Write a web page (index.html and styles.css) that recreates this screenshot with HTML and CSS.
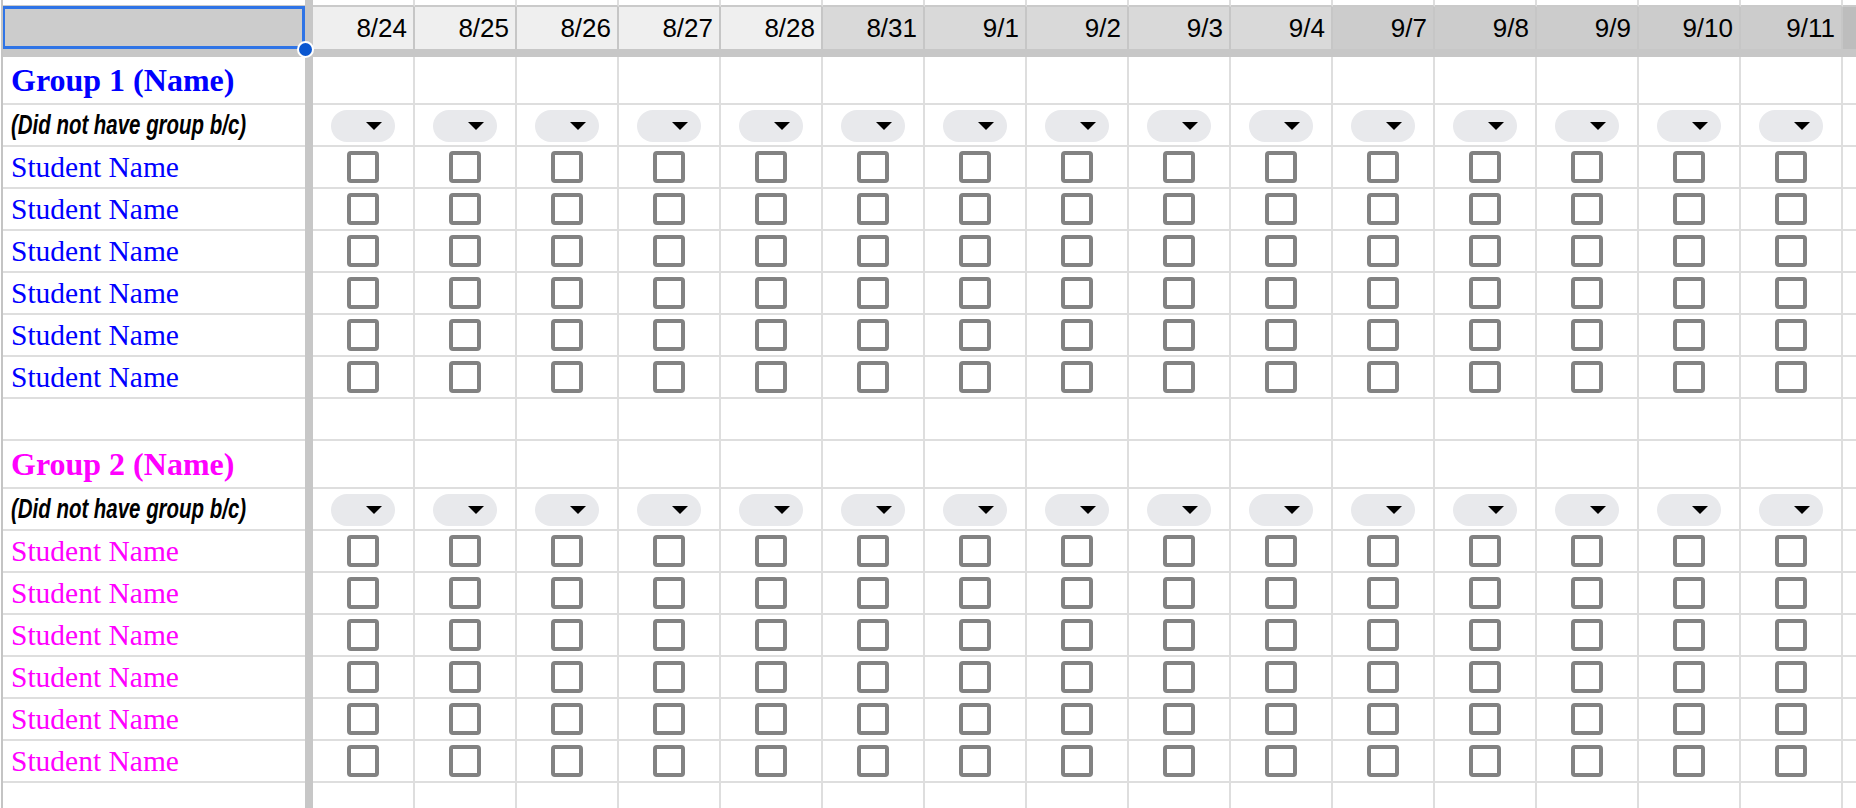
FILE: index.html
```html
<!DOCTYPE html>
<html lang="en">
<head>
    <meta charset="UTF-8">
    <title>Group Attendance</title>
    <link rel="stylesheet" href="styles.css">
</head>
<body>
    <div class="sheet" id="sheet"></div>

    <script>
        const dates = ['8/24', '8/25', '8/26', '8/27', '8/28', '8/31', '9/1', '9/2', '9/3', '9/4', '9/7', '9/8', '9/9', '9/10', '9/11'];
        const sheet = document.getElementById('sheet');

        // header shade changes every school week
        function weekClass(i) {
            if (i < 5) return 'wk1';
            if (i < 10) return 'wk2';
            return 'wk3';
        }

        function addRow(rowClass, firstCell, fill) {
            const row = document.createElement('div');
            row.className = 'row ' + rowClass;
            let html = firstCell + '<div class="freeze"></div>';
            dates.forEach((d, i) => {
                html += fill(d, i);
            });
            html += '<div class="cell spill"></div>';
            row.innerHTML = html;
            sheet.appendChild(row);
        }

        const empty = () => '<div class="cell"></div>';
        const checkbox = () => '<div class="cell"><input type="checkbox" class="cb"></div>';
        const chip = () => '<div class="cell"><span class="chip"><i class="caret"></i></span></div>';

        addRow('top', '<div class="cell name"></div>', empty);
        addRow('head', '<div class="cell name corner"><span class="handle"></span></div>',
            (d, i) => '<div class="cell date ' + weekClass(i) + '">' + d + '</div>');

        const bar = document.createElement('div');
        bar.className = 'freeze-row';
        sheet.appendChild(bar);

        function addGroup(num, color) {
            addRow('title', '<div class="cell name"><span class="group ' + color + '">Group ' + num + ' (Name)</span></div>', empty);
            addRow('body', '<div class="cell name"><span class="reason">(Did not have group b/c)</span></div>', chip);
            for (let s = 0; s < 6; s++) {
                addRow('body', '<div class="cell name"><span class="student ' + color + '">Student Name</span></div>', checkbox);
            }
            addRow('body', '<div class="cell name"></div>', empty);
        }

        addGroup(1, 'blue');
        addGroup(2, 'pink');
    </script>
</body>
</html>
```

FILE: styles.css
```css
body {
    margin: 0;
    background-color: #ffffff;
    font-family: 'Liberation Sans', Arial, sans-serif;
    color: #000;
    overflow: hidden;
}

.sheet {
    margin-left: 1px;
    border-left: 2px solid #c4c4c4;
    height: 808px;
    overflow: hidden;
}

.row {
    display: grid;
    grid-template-columns: 302px 8px repeat(15, 102px) 1fr;
}

.cell {
    box-sizing: border-box;
    height: 42px;
    border-right: 2px solid #dedede;
    border-bottom: 2px solid #dedede;
    display: flex;
    align-items: center;
    justify-content: center;
}

.cell.name {
    justify-content: flex-start;
    padding-left: 8px;
    border-right: none;
    white-space: nowrap;
    overflow: hidden;
}

.freeze {
    background-color: #c7c7c7;
}

.freeze-row {
    height: 8px;
    background-color: #c7c7c7;
}

/* strip of the row above the header */
.top .cell {
    height: 7px;
    border-bottom-color: #cacaca;
}

.head .cell {
    height: 42px;
    border-bottom: none;
    border-right-color: #c6c6c6;
}

.head .corner {
    overflow: visible;
}

.date {
    justify-content: flex-end;
    padding-right: 6px;
    font-size: 26px;
}

.wk1 { background-color: #efefef; }
.wk2 { background-color: #d9d9d9; }
.wk3 { background-color: #cccccc; }

.head .spill {
    background-color: #bdbdbd;
    border-right: none;
}

.corner {
    position: relative;
    background-color: #cccccc;
}

.corner::after {
    content: '';
    position: absolute;
    left: -1px;
    top: -1px;
    right: 0;
    bottom: 0;
    border: 3px solid #2f74e6;
}

.handle {
    position: absolute;
    right: -9px;
    bottom: -9px;
    width: 13px;
    height: 13px;
    border: 2px solid #ffffff;
    border-radius: 50%;
    background-color: #0b57d0;
    z-index: 2;
}

.title .cell {
    height: 48px;
}

.spill {
    border-right: none;
}

.group {
    font-family: 'Liberation Serif', 'Times New Roman', serif;
    font-weight: bold;
    font-size: 32px;
}

.student {
    font-family: 'Liberation Serif', 'Times New Roman', serif;
    font-size: 29.5px;
}

/* no condensed face installed, so squeeze the sans */
.reason {
    display: inline-block;
    font-family: 'Liberation Sans', Arial, sans-serif;
    font-style: italic;
    font-weight: bold;
    font-size: 28px;
    transform: scaleX(0.73);
    transform-origin: left center;
}

.blue { color: #0000ff; }
.pink { color: #ff00ff; }

.cb {
    appearance: none;
    margin: 0;
    width: 32px;
    height: 32px;
    box-sizing: border-box;
    border: 4px solid #828282;
    border-radius: 4px;
    background: #fff;
}

.chip {
    display: flex;
    align-items: center;
    justify-content: flex-end;
    box-sizing: border-box;
    width: 64px;
    height: 32px;
    margin-top: 2px;
    padding-right: 13px;
    border-radius: 16px;
    background-color: #e8e9ec;
}

.caret {
    width: 0;
    height: 0;
    border-left: 8px solid transparent;
    border-right: 8px solid transparent;
    border-top: 8px solid #000;
}
```
